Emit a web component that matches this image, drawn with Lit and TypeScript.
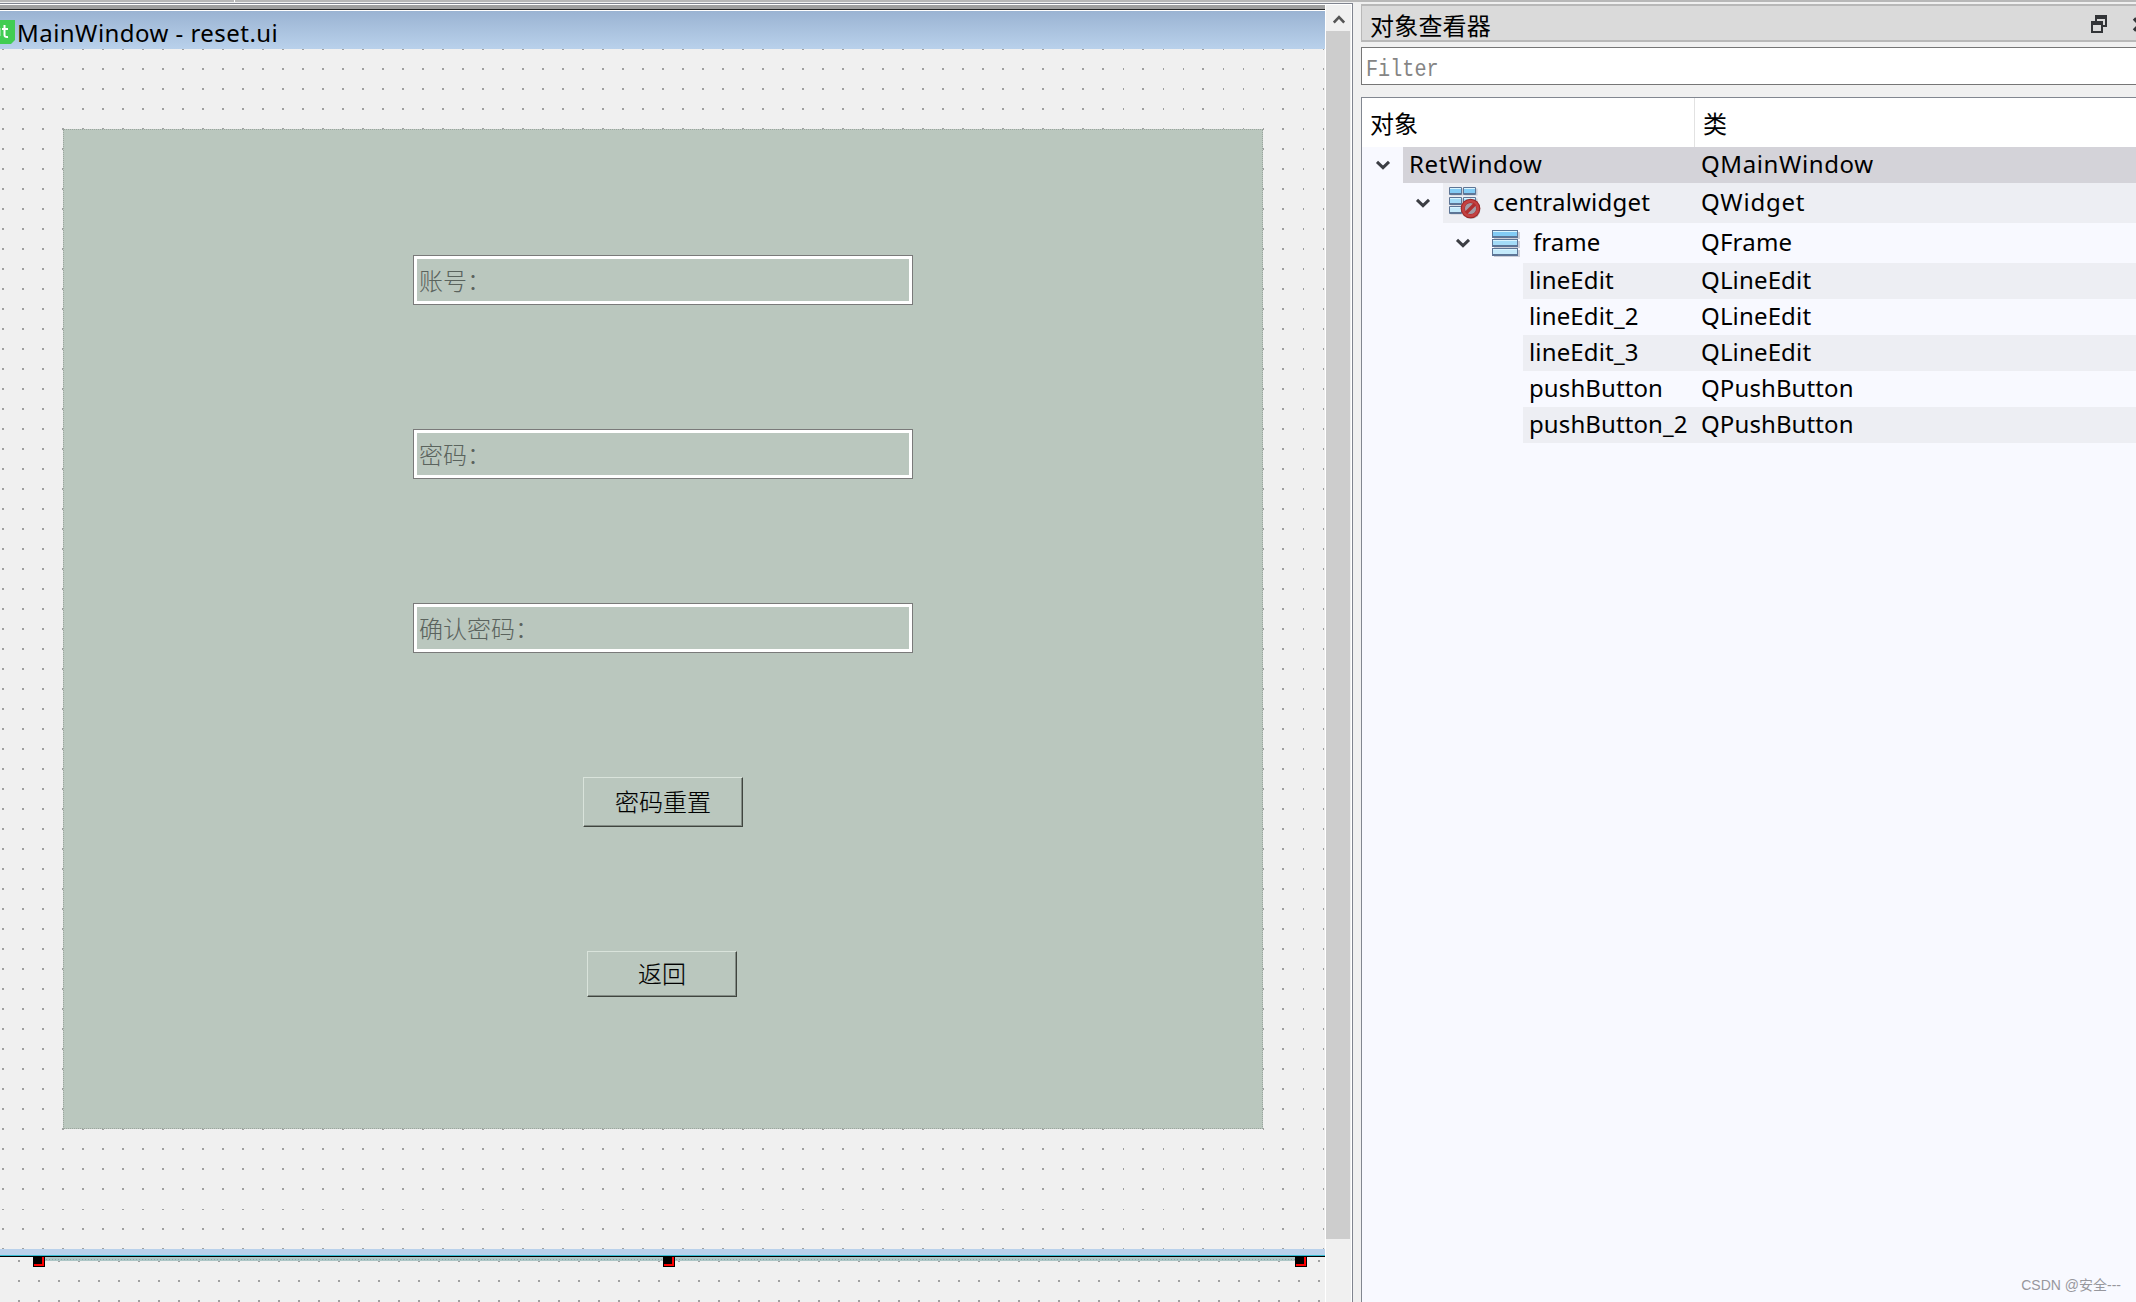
import { LitElement, html, css, svg } from "lit";
import { customElement } from "lit/decorators.js";
import { styleMap } from "lit/directives/style-map.js";

type Row = { name: string; cls: string; indent: number; height: number; open: boolean; icon?: "grid" | "rows"; tone: string; track: [number, number] };

const rows: Row[] = [
  { name: "RetWindow", cls: "QMainWindow", indent: 41, height: 36, open: true, tone: "sel", track: [0.6, 0.6] },
  { name: "centralwidget", cls: "QWidget", indent: 81, height: 40, open: true, icon: "grid", tone: "alt", track: [0.2, 0.8] },
  { name: "frame", cls: "QFrame", indent: 121, height: 40, open: true, icon: "rows", tone: "", track: [0.05, 0.2] },
  { name: "lineEdit", cls: "QLineEdit", indent: 161, height: 36, open: false, tone: "alt", track: [0.15, 0.15] },
  { name: "lineEdit_2", cls: "QLineEdit", indent: 161, height: 36, open: false, tone: "", track: [0.15, 0.15] },
  { name: "lineEdit_3", cls: "QLineEdit", indent: 161, height: 36, open: false, tone: "alt", track: [0.15, 0.15] },
  { name: "pushButton", cls: "QPushButton", indent: 161, height: 36, open: false, tone: "", track: [0.1, 0.1] },
  { name: "pushButton_2", cls: "QPushButton", indent: 161, height: 36, open: false, tone: "alt", track: [0.1, 0.1] },
];

// Grid columns whose dots are only one pixel wide.
const thinColumns = [1122, 1162, 1182, 1222, 1242, 1262, 1302, 1322];

const bar = (x: number, y: number, w: number, fill: string) => svg`
  <rect x=${x + 1.5} y=${y + 1.5} width=${w} height="7" fill="#b9bcc8" opacity=".7"/>
  <rect x=${x} y=${y} width=${w} height="8" rx="1" fill="#5d7596"/>
  <rect x=${x + 1} y=${y + 1} width=${w - 2} height="5" fill=${fill}/>
  <rect x=${x + 1} y=${y + 1} width=${w - 2} height="1" fill="#d8f4ff"/>`;

const rowsIcon = html`<svg width="32" height="32" viewBox="0 0 32 32" shape-rendering="crispEdges">
  ${bar(3, 3, 26, "#82cbf5")}${bar(3, 12, 26, "#a3dcf8")}${bar(3, 21, 26, "#c4eafb")}</svg>`;

const gridIcon = html`<svg width="32" height="32" viewBox="0 0 32 32">
  ${bar(0, 0, 13, "#82cbf5")}${bar(14, 0, 13, "#82cbf5")}${bar(0, 10, 13, "#a3dcf8")}${bar(14, 10, 13, "#a3dcf8")}${bar(0, 19, 13, "#c4eafb")}
  <circle cx="22" cy="22.5" r="9.4" fill="#8d8a90" opacity=".6"/>
  <circle cx="21.5" cy="21.5" r="9.8" fill="#9c2727"/>
  <circle cx="21.5" cy="21.5" r="7.4" fill="none" stroke="#c44242" stroke-width="2.8"/>
  <circle cx="21.5" cy="21.5" r="5.6" fill="#a39ca6"/>
  <path d="M17 26 26 17" stroke="#b02f2f" stroke-width="3.4"/></svg>`;

@customElement("app-root")
export class AppRoot extends LitElement {
  static styles = css`
    :host { display: block; }
    * { box-sizing: border-box; }
    .page { position: relative; width: 2136px; height: 1302px; overflow: hidden; background: #f0f0f0; display: flex; flex-direction: column; color: #000;
      font-family: "Noto Sans", "Noto Sans CJK SC", sans-serif; font-size: 24px; }
    .strip { height: 2px; flex: none; background: #b8b8b8; display: flex; }
    .tick { width: 1px; margin-left: 234px; background: #fff; }
    .cols { flex: 1; display: flex; min-height: 0; padding-top: 1px; }
    .left { width: 1353px; border-top: 1px solid #80848f; border-right: 1px solid #80848f; display: flex; flex: none; }
    .inner { width: 100%; border-top: 1px solid #fff; border-right: 1px solid #fff; display: flex; }
    .canvas { width: 1325px; display: flex; flex-direction: column; }
    .mdi { height: 4px; background: #a0a0a0; }
    .dark { height: 1px; background: #282828; }
    .white { height: 1px; background: #fff; }
    .title { height: 38px; background: linear-gradient(#9ab3d2, #b9d1eb); display: flex; align-items: center; overflow: hidden; }
    .qt { width: 15px; height: 24px; margin-top: 4px; flex: none; }
    .caption { margin-left: 2px; margin-top: 5px; white-space: pre; letter-spacing: 0.46px; }
    .board { position: relative; flex: none; height: 1200px; }
    .board > svg, .below > svg { display: block; position: absolute; left: 0; top: 0; }
    .frame { position: relative; margin: 80px 0 0 63px; width: 1200px; height: 1000px; background: #bac7be; outline: 1px dotted #9ba59e; outline-offset: -1px;
      display: flex; flex-direction: column; align-items: center; padding-top: 126px; font-family: "Noto Sans CJK SC", sans-serif; font-weight: 300; }
    .edit { width: 500px; height: 50px; border: 1px solid #7a7a7a; margin-bottom: 124px; flex: none; }
    .well { height: 48px; border: 3px solid #fff; padding-left: 2px; color: #5a635d; line-height: 42px; }
    .btn { width: 160px; height: 50px; border: 1px solid; border-color: #d9e3db #40453f #40453f #d9e3db; box-shadow: inset -1px -1px #838c85; padding-bottom: 3px;
      display: flex; align-items: center; justify-content: center; flex: none; margin-bottom: 124px; -webkit-text-stroke: 0.15px #000; }
    .back { width: 150px; height: 46px; margin-left: -2px; }
    .edge { height: 8px; flex: none; background: #b9d1eb; border-bottom: 1px solid #000; box-shadow: inset 0 -1px #35bcd2; }
    .below { position: relative; flex: 1; }
    .vbar { width: 26px; border-left: 1px solid #fff; background: #f0f0f0; display: flex; flex-direction: column; }
    .up { height: 26px; display: flex; align-items: center; justify-content: center; padding-top: 1px; }
    .thumb { height: 1208px; width: 24px; background: #cdcdcd; }
    .right { flex: 1; margin-left: 8px; display: flex; flex-direction: column; padding-top: 1px; min-width: 0; }
    .dock { height: 38px; background: #dadada; border: 2px solid #b8b8b8; border-width: 2px 0 2px 1px; padding-left: 8px; display: flex; align-items: center; flex: none; }
    .dock svg { margin-top: 4px; }
    .docktitle { flex: 1; padding-top: 2px; letter-spacing: 0.2px; }
    .filter { height: 38px; margin-top: 5px; flex: none; background: #fff; border: 1px solid #767676; border-right: 0; padding-left: 4px; color: #858585;
      font-family: "Liberation Mono", monospace; line-height: 44px; }
    .filter span { display: inline-block; transform: scaleX(0.84); transform-origin: 0 0; }
    .tree { margin-top: 12px; flex: 1; border: 1px solid #828790; border-width: 1px 0 0 1px; background: #f8f9ff; display: flex; flex-direction: column; }
    .head { height: 49px; flex: none; background: #fff; display: flex; align-items: center; padding-left: 8px; }
    .h1 { width: 325px; height: 49px; border-right: 1px solid #e2e2e2; line-height: 51px; }
    .h2 { padding-left: 8px; height: 49px; line-height: 51px; }
    .row { display: flex; }
    .gutter { display: flex; align-items: center; justify-content: flex-end; padding: 0 12px 1px 0; flex: none; }
    .body { flex: 1; display: flex; align-items: center; }
    .sel { background: #d4d3d9; }
    .alt { background: #edeef3; }
    .name { padding-left: 6px; flex: 1; display: flex; align-items: center; white-space: nowrap; }
    .label { padding-bottom: 4px; }
    .ic { width: 44px; height: 32px; }
    .cls { width: 435px; white-space: nowrap; padding-bottom: 4px; }
    .mark { position: absolute; right: 15px; bottom: 8px; font: 14px "Liberation Sans", "Noto Sans CJK SC", sans-serif; color: #97979d; }
  `;

  dotGrid(id: string, x: number, y: number, h: number) {
    return html`<svg width="1325" height=${h} shape-rendering="crispEdges">
      <defs><pattern id=${id} x=${x} y=${y} width="20" height="20" patternUnits="userSpaceOnUse"><rect width="2" height="2" fill="#a0a0a0"/></pattern></defs>
      <rect width="1325" height=${h} fill="url(#${id})"/></svg>`;
  }

  handle(x: number) {
    return svg`<rect x=${x} width="12" height="10" fill="#000"/><rect x=${x + 1} width="10" height="9" fill="#f00"/><rect x=${x + 1} width="8" height="7" fill="#000"/>`;
  }

  render() {
    return html`<div class="page">
      <div class="strip"><div class="tick"></div></div>
      <div class="cols">
        <div class="left"><div class="inner">
          <div class="canvas">
            <div class="mdi"></div><div class="dark"></div><div class="white"></div>
            <div class="title">
              <svg class="qt" viewBox="0 0 15 24"><path d="M0 0H15V20L11 24H0Z" fill="#41cd52"/><path d="M0 8V16" stroke="#fff" stroke-width="1" opacity=".7"/><path d="M4.5 5V15Q4.5 17.5 8 17M2 9H8" fill="none" stroke="#fff" stroke-width="2"/></svg>
              <span class="caption">MainWindow - reset.ui</span>
            </div>
            <div class="board">
              ${this.dotGrid("da", 2, -1, 1200)}
              <svg width="1325" height="1200" shape-rendering="crispEdges" fill="#f0f0f0">
                ${thinColumns.map((x) => svg`<rect x=${x} width="1" height="1200"/>`)}
                <rect y="1159" width="1170" height="1"/>
              </svg>
              <div class="frame">
                ${["账号：", "密码：", "确认密码："].map((t) => html`<div class="edit"><div class="well">${t}</div></div>`)}
                <div class="btn">密码重置</div>
                <div class="btn back">返回</div>
              </div>
            </div>
            <div class="edge"></div>
            <div class="below">
              ${this.dotGrid("db", 18, 3, 45)}
              <svg width="1325" height="45" shape-rendering="crispEdges">
                <rect x="44" width="1252" height="4" fill="#adc6c6"/>
                <path d="M46 2.5H1295" stroke="#8fa6a6" stroke-dasharray="1 2"/>
                ${this.handle(33)}${this.handle(663)}${this.handle(1295)}
              </svg>
            </div>
          </div>
          <div class="vbar">
            <div class="up"><svg width="12" height="10" viewBox="0 0 12 10"><path d="M0.8 8.5 6 3.2 11.2 8.5" fill="none" stroke="#555" stroke-width="2.6"/></svg></div>
            <div class="thumb"></div>
          </div>
        </div></div>
        <div class="right">
          <div class="dock">
            <span class="docktitle">对象查看器</span>
            <svg width="45" height="20" viewBox="2091 14 45 20" shape-rendering="crispEdges">
              <rect x="2095" y="14" width="12" height="12" fill="#323437"/><rect x="2097" y="18" width="8" height="6" fill="#dadada"/>
              <rect x="2091" y="20" width="12" height="12" fill="#323437"/><rect x="2093" y="24" width="8" height="6" fill="#dadada"/>
              <path d="M2134 17.5 2140 23.5 2134 29.5" fill="none" stroke="#323437" stroke-width="3.4" shape-rendering="auto"/>
            </svg>
          </div>
          <div class="filter"><span>Filter</span></div>
          <div class="tree">
            <div class="head"><div class="h1">对象</div><div class="h2">类</div></div>
            ${rows.map((r) => html`<div class="row" style=${styleMap({ height: r.height + "px" })}>
              <div class="gutter" style=${styleMap({ width: r.indent + "px" })}>
                ${r.open ? html`<svg width="16" height="10" viewBox="0 0 16 10"><path d="M2 1.8 8 7.6 14 1.8" fill="none" stroke="#3c3e44" stroke-width="3"/></svg>` : ""}
              </div>
              <div class="body ${r.tone}">
                <div class="name">${r.icon ? html`<span class="ic">${r.icon === "grid" ? gridIcon : rowsIcon}</span>` : ""}<span class="label" style=${styleMap({ letterSpacing: r.track[0] + "px" })}>${r.name}</span></div>
                <div class="cls" style=${styleMap({ letterSpacing: r.track[1] + "px" })}>${r.cls}</div>
              </div></div>`)}
          </div>
        </div>
      </div>
      <div class="mark">CSDN @安全---</div>
    </div>`;
  }
}
